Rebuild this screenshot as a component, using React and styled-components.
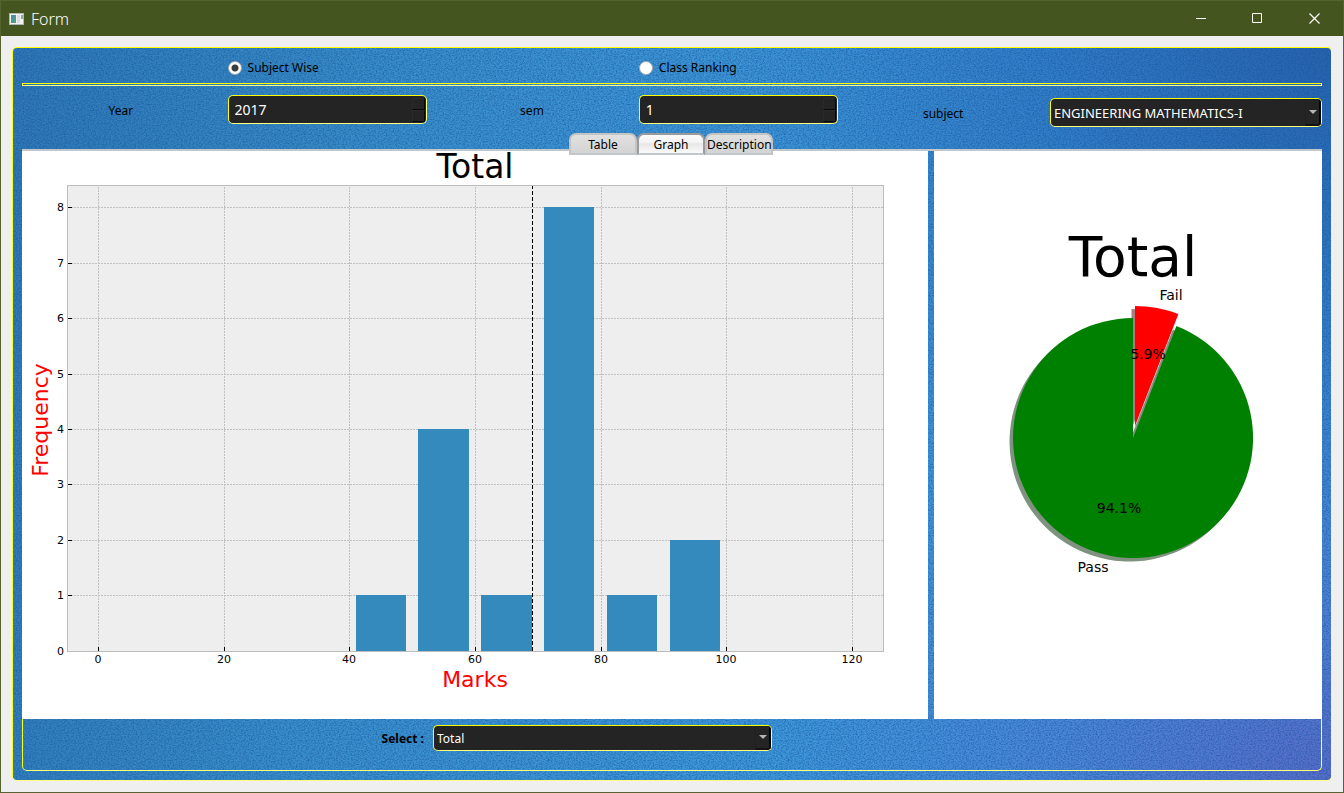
import React, { useState } from "react";
import styled, { createGlobalStyle, css } from "styled-components";

const UI_FONT = '"Noto Sans", "Open Sans", sans-serif';
const PLOT_FONT = '"DejaVu Sans", sans-serif';

const weave = `url("data:image/svg+xml,%3Csvg xmlns='http://www.w3.org/2000/svg' width='240' height='240'%3E%3Cfilter id='n' x='0' y='0' width='100%25' height='100%25' color-interpolation-filters='sRGB'%3E%3CfeTurbulence type='fractalNoise' baseFrequency='0.6 0.8' numOctaves='2' seed='4' stitchTiles='stitch'/%3E%3CfeColorMatrix values='0 0 0 0 0.08 0 0 0 0 0.32 0 0 0 0 0.6 1.3 0 0 0 -0.46'/%3E%3C/filter%3E%3Crect width='240' height='240' filter='url(%23n)'/%3E%3C/svg%3E")`;

const GlobalStyle = createGlobalStyle`
  * { box-sizing: border-box; }
  body { margin: 0; background: #efefef; font: 12px/16px ${UI_FONT}; color: #000; }
`;

const bevel = css`
  border: 1px solid #ffff00;
  border-right-color: #ffff7f;
  border-bottom-color: #ffff7f;
`;

const Window = styled.div`
  min-height: 100vh;
  display: flex;
  flex-direction: column;
  border: 1px solid #55642f;
  background: #efefef;
`;

const TitleBar = styled.header`
  height: 35px;
  display: flex;
  align-items: center;
  padding-left: 8px;
  gap: 7px;
  background: #45551f;
  color: #fff;
`;

const Title = styled.h1`
  flex: 1;
  margin: 0;
  font-size: 16px;
  line-height: 22px;
  font-weight: 300;
`;

const WindowButtons = styled.div`
  display: flex;
`;

const WindowButton = styled.button`
  width: 57px;
  height: 35px;
  display: flex;
  align-items: center;
  justify-content: center;
  padding: 0;
  border: 0;
  background: transparent;
  color: #fff;
`;

const Body = styled.main`
  flex: 1;
  display: flex;
  padding: 11px;
`;

const Panel = styled.div`
  ${bevel}
  flex: 1;
  min-width: 0;
  display: flex;
  flex-direction: column;
  padding: 0 9px 9px;
  border-radius: 5px;
  background:
    ${weave},
    radial-gradient(ellipse 42% 60% at 100% 100%, rgba(92, 106, 200, 0.95), rgba(84, 124, 214, 0.6) 50%, rgba(62, 150, 226, 0) 100%),
    radial-gradient(ellipse 46% 80% at 100% 0%, #2862ae, rgba(44, 112, 190, 0.7) 45%, rgba(56, 144, 214, 0) 100%),
    linear-gradient(100deg, #2f78b6 0%, #3a90cc 28%, #3e98da 55%, #409ce2 100%);
`;

const ModeRow = styled.div`
  height: 35px;
  display: grid;
  grid-template-columns: repeat(5, 1fr) 272px;
  column-gap: 6px;
  align-items: center;
  padding-top: 4px;
`;

const ModeLabel = styled.label`
  grid-column: ${(p) => p.$column} / span 2;
  display: flex;
  align-items: center;
  gap: 6px;
`;

const Radio = styled.input`
  appearance: none;
  width: 14px;
  height: 14px;
  margin: 0;
  border: 1px solid #a9a9a9;
  border-radius: 50%;
  background: #fff;
  &:checked {
    background: radial-gradient(circle, #3c3c3c 0 3px, #fff 4px);
  }
`;

const Divider = styled.hr`
  ${bevel}
  width: 100%;
  height: 3px;
  flex: none;
  margin: 0;
`;

const FilterRow = styled.div`
  height: 41px;
  display: grid;
  grid-template-columns: repeat(5, 1fr) 272px;
  column-gap: 6px;
  padding-top: 9px;
`;

const FieldLabel = styled.label`
  height: 29px;
  align-self: ${(p) => (p.$low ? "end" : "start")};
  padding-right: 2px;
  text-align: center;
  line-height: 32px;
`;

const Field = styled.div`
  ${bevel}
  height: ${(p) => (p.$compact ? 26 : 29)}px;
  align-self: ${(p) => (p.$low ? "end" : "start")};
  display: flex;
  align-items: stretch;
  min-width: 0;
  overflow: hidden;
  border-radius: 5px;
  background: #242424;
`;

const NumberInput = styled.input`
  appearance: textfield;
  flex: 1;
  min-width: 0;
  padding: 0 6px;
  border: 0;
  outline: 0;
  background: transparent;
  color: #fff;
  font: 14px/20px ${UI_FONT};
  &::-webkit-inner-spin-button { appearance: none; }
`;

const Steppers = styled.div`
  width: 14px;
  display: flex;
  flex-direction: column;
  padding: 2px 1px 1px 0;
`;

const Stepper = styled.button`
  flex: 1;
  padding: 0;
  border: 1px solid #2a2a2a;
  border-right-color: #080808;
  border-bottom-color: #080808;
  background: #242424;
`;

const Select = styled.select`
  appearance: none;
  flex: 1;
  min-width: 0;
  padding: 1px 3px 0;
  border: 0;
  outline: 0;
  background: transparent;
  color: #fff;
  font: ${(p) => (p.$small ? 12 : 13)}px/20px ${UI_FONT};
`;

const DropMark = styled.span`
  width: 16px;
  display: flex;
  align-items: center;
  justify-content: center;
  border: 1px solid #202020;
  border-right: 2px solid #050505;
  border-bottom: 2px solid #121212;
`;

const TabBar = styled.div`
  position: relative;
  z-index: 1;
  display: flex;
  justify-content: center;
  margin: 6px 0 -6px;
  padding-right: 2px;
`;

const Tab = styled.button`
  width: 68px;
  height: 22px;
  padding: 1px 0 0;
  border: 2px solid #c2c7cb;
  border-top-color: ${(p) => (p.$active ? "#9b9b9b" : "#c4c4c3")};
  border-left-color: ${(p) => (p.$active ? "#9b9b9b" : "#c4c4c3")};
  border-right-color: ${(p) => (p.$active ? "#9b9b9b" : "#c4c4c3")};
  border-radius: 7px 7px 0 0;
  background: ${(p) =>
    p.$active ? "linear-gradient(#fafafa, #f4f4f4 40%, #e7e7e7 50%, #fafafa)" : "linear-gradient(#e1e1e1, #d3d3d3)"};
  color: #000;
  font: 12px/18px ${UI_FONT};
  white-space: nowrap;
`;

const Page = styled.section`
  flex: 1;
  display: flex;
  flex-direction: column;
  border-top: 2px solid #c2c7cb;
`;

const Plots = styled.div`
  flex: 1;
  display: grid;
  grid-template-columns: 906fr 388fr;
  gap: 6px;
`;

const Plot = styled.figure`
  display: flex;
  min-width: 0;
  margin: 0;
  background: #fff;
  svg { display: block; width: 100%; height: 100%; overflow: visible; }
`;

const SelectRow = styled.div`
  ${bevel}
  height: 52px;
  display: grid;
  grid-template-columns: 404fr 339fr 543fr;
  column-gap: 6px;
  padding-top: 6px;
  border-top: 0;
  border-radius: 0 0 5px 5px;
`;

const SelectLabel = styled.label`
  padding-right: 3px;
  text-align: right;
  font-weight: 700;
  font-size: 12px;
  line-height: 28px;
`;

const X0 = 98.5;
const XSTEP = 6.28;
const Y0 = 651;
const YSTEP = 55.45;
const bins = [
  { from: 41, to: 49, count: 1 },
  { from: 51, to: 59, count: 4 },
  { from: 61, to: 69, count: 1 },
  { from: 71, to: 79, count: 8 },
  { from: 81, to: 89, count: 1 },
  { from: 91, to: 99, count: 2 },
];
const px = (v) => Math.round(X0 + v * XSTEP - 0.3);
const py = (v) => Math.round(Y0 - v * YSTEP - 0.2);

function Histogram() {
  const xt = [0, 20, 40, 60, 80, 100, 120];
  const yt = [0, 1, 2, 3, 4, 5, 6, 7, 8];
  return (
    <svg viewBox="22 151 906 568" fontFamily={PLOT_FONT} role="img" aria-label="Marks histogram">
      <rect x="67.5" y="185.5" width="816" height="466" fill="#eeeeee" stroke="#bcbcbc" />
      <g stroke="#b2b2b2" strokeWidth="1" strokeDasharray="2 1" opacity="0.75">
        {xt.map((v) => <path key={v} d={`M${px(v) + 0.5} 651V186`} />)}
        {yt.slice(1).map((v) => <path key={v} d={`M68 ${py(v) + 0.5}H883`} />)}
      </g>
      <g fill="#348abd">
        {bins.map((b) => (
          <rect key={b.from} x={px(b.from)} y={py(b.count)} width={px(b.to) - px(b.from)} height={Y0 - py(b.count)} />
        ))}
      </g>
      <path d="M532.5 651V186" stroke="#000" strokeDasharray="4 2" />
      <g stroke="#000">
        {xt.map((v) => <path key={v} d={`M${px(v) + 0.5} 651v-4`} />)}
        {yt.slice(1).map((v) => <path key={v} d={`M68 ${py(v) + 0.5}h4`} />)}
      </g>
      <g fontSize="11">
        {xt.map((v) => <text key={v} x={px(v)} y="663" textAnchor="middle">{v}</text>)}
        {yt.map((v) => <text key={v} x="64" y={py(v) + 4} textAnchor="end">{v}</text>)}
      </g>
      <text x="475" y="178" fontSize="33" textAnchor="middle">Total</text>
      <text x="475" y="687" fontSize="22" fill="#f00" textAnchor="middle">Marks</text>
      <text transform="translate(48 420) rotate(-90)" fontSize="22" fill="#f00" textAnchor="middle">Frequency</text>
    </svg>
  );
}

const PASS = "M0 0L0 -120A120 120 0 1 0 43.4 -111.9Z";
const FAIL = "M0 0L0 -120A120 120 0 0 1 43.4 -111.9Z";

function Pie() {
  return (
    <svg viewBox="934 151 388 568" fontFamily={PLOT_FONT} role="img" aria-label="Pass and fail share">
      <path d={PASS} transform="translate(1129.5 441.5)" fill="#002600" opacity="0.5" />
      <path d={FAIL} transform="translate(1131.5 429)" fill="#4c0000" opacity="0.5" />
      <path d={PASS} transform="translate(1133 438)" fill="#008000" />
      <path d={FAIL} transform="translate(1135 426)" fill="#f00" />
      <text x="1133" y="276" fontSize="55" textAnchor="middle">Total</text>
      <g fontSize="14" textAnchor="middle">
        <text x="1171" y="300">Fail</text>
        <text x="1148" y="359">5.9%</text>
        <text x="1119" y="513">94.1%</text>
        <text x="1093" y="572">Pass</text>
      </g>
    </svg>
  );
}

function SpinBox({ id, initial }) {
  const [value, setValue] = useState(initial);
  return (
    <Field>
      <NumberInput id={id} type="number" value={value} onChange={(e) => setValue(Number(e.target.value))} />
      <Steppers>
        <Stepper type="button" aria-label="Increase" onClick={() => setValue(value + 1)} />
        <Stepper type="button" aria-label="Decrease" onClick={() => setValue(value - 1)} />
      </Steppers>
    </Field>
  );
}

function ComboBox({ id, option, low, compact }) {
  return (
    <Field $low={low} $compact={compact}>
      <Select id={id} $small={compact}>
        <option>{option}</option>
      </Select>
      <DropMark>
        <svg width="8" height="5" viewBox="0 0 8 5"><path d="M0 0h8L4 4z" fill="#b4b4b4" /></svg>
      </DropMark>
    </Field>
  );
}

function FormIcon() {
  return (
    <svg width="15" height="12" viewBox="0 0 15 12">
      <defs>
        <linearGradient id="pane" x1="0" y1="0" x2="1" y2="1">
          <stop offset="0" stopColor="#4f86b0" />
          <stop offset="1" stopColor="#46a878" />
        </linearGradient>
      </defs>
      <rect x="0.5" y="0.5" width="14" height="11" fill="#f2f2f2" stroke="#b5b5b5" />
      <rect x="2" y="2" width="5" height="8" fill="url(#pane)" />
      <rect x="8" y="2" width="3" height="8" fill="#dcdcdc" />
      <rect x="12" y="2" width="2" height="4" fill="#7fb0ae" />
    </svg>
  );
}

export default function App() {
  const [mode, setMode] = useState("subject");
  const [tab, setTab] = useState("Graph");
  return (
    <Window>
      <GlobalStyle />
      <TitleBar>
        <FormIcon />
        <Title>Form</Title>
        <WindowButtons>
          <WindowButton type="button" aria-label="Minimize">
            <svg width="10" height="11"><path d="M0 5.5h10" stroke="currentColor" /></svg>
          </WindowButton>
          <WindowButton type="button" aria-label="Maximize">
            <svg width="11" height="11"><path d="M.5.5h9v9h-9z" fill="none" stroke="currentColor" /></svg>
          </WindowButton>
          <WindowButton type="button" aria-label="Close">
            <svg width="11" height="11"><path d="M.5.5l10 10M10.5.5l-10 10" stroke="currentColor" strokeWidth="1.2" /></svg>
          </WindowButton>
        </WindowButtons>
      </TitleBar>
      <Body>
        <Panel>
          <ModeRow>
            <ModeLabel $column={2}>
              <Radio type="radio" name="mode" checked={mode === "subject"} onChange={() => setMode("subject")} />
              Subject Wise
            </ModeLabel>
            <ModeLabel $column={4}>
              <Radio type="radio" name="mode" checked={mode === "class"} onChange={() => setMode("class")} />
              Class Ranking
            </ModeLabel>
          </ModeRow>
          <Divider />
          <FilterRow>
            <FieldLabel htmlFor="year">Year</FieldLabel>
            <SpinBox id="year" initial={2017} />
            <FieldLabel htmlFor="sem">sem</FieldLabel>
            <SpinBox id="sem" initial={1} />
            <FieldLabel htmlFor="subject" $low>subject</FieldLabel>
            <ComboBox id="subject" option="ENGINEERING MATHEMATICS-I" low />
          </FilterRow>
          <TabBar role="tablist">
            {["Table", "Graph", "Description"].map((name) => (
              <Tab key={name} type="button" role="tab" aria-selected={tab === name} $active={tab === name} onClick={() => setTab(name)}>
                {name}
              </Tab>
            ))}
          </TabBar>
          <Page>
            <Plots>
              <Plot><Histogram /></Plot>
              <Plot><Pie /></Plot>
            </Plots>
            <SelectRow>
              <SelectLabel htmlFor="component">Select :</SelectLabel>
              <ComboBox id="component" option="Total" compact />
            </SelectRow>
          </Page>
        </Panel>
      </Body>
    </Window>
  );
}
